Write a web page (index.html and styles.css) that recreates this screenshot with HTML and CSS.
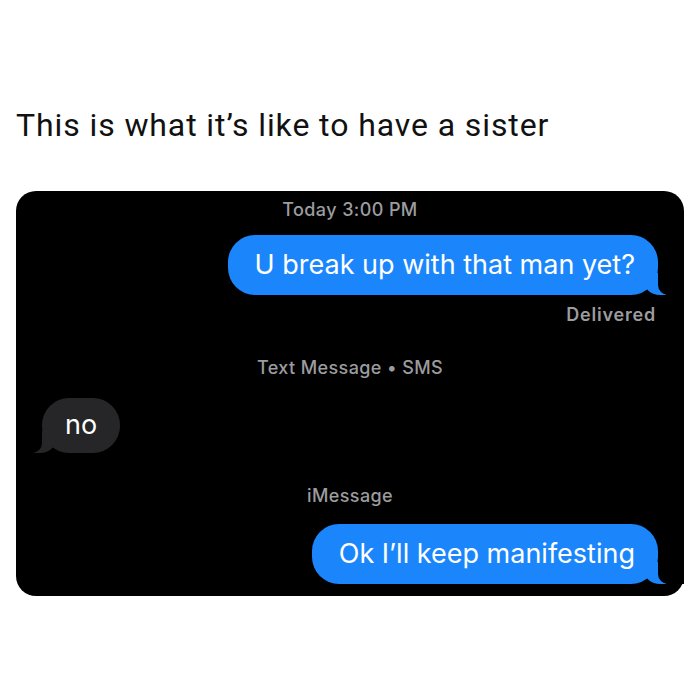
FILE: index.html
```html
<!DOCTYPE html>
<html>
<head>
<meta charset="utf-8">
<link rel="stylesheet" href="styles.css">
</head>
<body>
<main class="post">
  <h1 class="title">This is what it’s like to have a sister</h1>
  <section class="chat">
    <div class="meta meta-center"><span class="meta-strong">Today</span> 3:00 PM</div>
    <div class="row row-sent"><div class="bubble sent">U break up with that man yet?</div></div>
    <div class="meta meta-right">Delivered</div>
    <div class="meta meta-center meta-gap">Text Message • SMS</div>
    <div class="row row-recv"><div class="bubble recv">no</div></div>
    <div class="meta meta-center meta-gap">iMessage</div>
    <div class="row row-sent row-last"><div class="bubble sent">Ok I’ll keep manifesting</div></div>
  </section>
</main>
</body>
</html>
```

FILE: styles.css
```css
html, body {
  margin: 0;
  padding: 0;
  background: #ffffff;
}

.post {
  padding: 104px 16px 0 16px;
  display: flex;
  flex-direction: column;
}

.title {
  margin: 0;
  font-family: Roboto, "Liberation Sans", sans-serif;
  font-weight: 400;
  font-size: 32px;
  line-height: 42px;
  color: #111111;
  letter-spacing: 0.9px;
}

.chat {
  margin-top: 45px;
  background: #000000;
  border-radius: 20px;
  padding: 9px 26px 12px 26px;
  display: flex;
  flex-direction: column;
  font-family: Inter, "Noto Sans", sans-serif;
}

.meta {
  font-size: 18px;
  line-height: 20px;
  color: #9c9c9f;
  font-weight: 500;
  letter-spacing: 0.4px;
}

.meta-center { text-align: center; }
.meta-right { text-align: right; margin-top: 10px; padding-right: 2px; font-weight: 600; letter-spacing: 0.8px; }
.meta-gap { margin-top: 33px; }

.row { display: flex; }
.row-sent { justify-content: flex-end; margin-top: 15px; }
.row-recv { justify-content: flex-start; margin-top: 20px; }
.row-last { margin-top: 18px; }

.bubble {
  position: relative;
  font-size: 27px;
  line-height: 30px;
  color: #ffffff;
  border-radius: 27px;
}

.sent {
  background: #1b86fc;
  padding: 15px 23px 15px 27px;
}

.recv {
  background: #262628;
  padding: 12px 23px 13px 23px;
}

.sent::before, .sent::after, .recv::before, .recv::after {
  content: "";
  position: absolute;
  bottom: 0;
  height: 22px;
}

.sent::before {
  right: -8px;
  width: 22px;
  background: #1b86fc;
  border-bottom-left-radius: 16px 14px;
}

.sent::after {
  right: -26px;
  width: 26px;
  background: #000000;
  border-bottom-left-radius: 10px;
}

.recv::before {
  left: -8px;
  width: 22px;
  background: #262628;
  border-bottom-right-radius: 16px 14px;
}

.recv::after {
  left: -26px;
  width: 26px;
  background: #000000;
  border-bottom-right-radius: 10px;
}
```
